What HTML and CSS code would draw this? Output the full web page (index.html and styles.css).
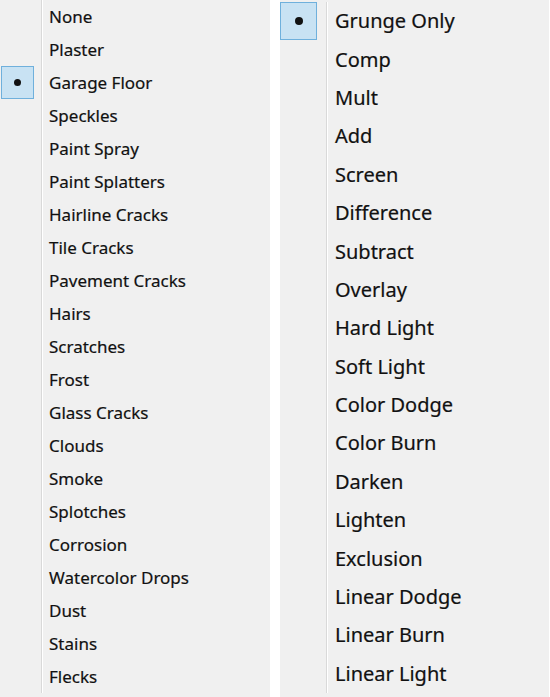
FILE: index.html
```html
<!DOCTYPE html>
<html>
<head>
<meta charset="utf-8">
<link rel="stylesheet" href="styles.css">
</head>
<body>
<div class="wrap">
  <ul class="menu menu-left">
    <li class="item"><span class="gut"></span><span class="label">None</span></li>
    <li class="item"><span class="gut"></span><span class="label">Plaster</span></li>
    <li class="item"><span class="gut"><span class="check"><span class="dot"></span></span></span><span class="label">Garage Floor</span></li>
    <li class="item"><span class="gut"></span><span class="label">Speckles</span></li>
    <li class="item"><span class="gut"></span><span class="label">Paint Spray</span></li>
    <li class="item"><span class="gut"></span><span class="label">Paint Splatters</span></li>
    <li class="item"><span class="gut"></span><span class="label">Hairline Cracks</span></li>
    <li class="item"><span class="gut"></span><span class="label">Tile Cracks</span></li>
    <li class="item"><span class="gut"></span><span class="label">Pavement Cracks</span></li>
    <li class="item"><span class="gut"></span><span class="label">Hairs</span></li>
    <li class="item"><span class="gut"></span><span class="label">Scratches</span></li>
    <li class="item"><span class="gut"></span><span class="label">Frost</span></li>
    <li class="item"><span class="gut"></span><span class="label">Glass Cracks</span></li>
    <li class="item"><span class="gut"></span><span class="label">Clouds</span></li>
    <li class="item"><span class="gut"></span><span class="label">Smoke</span></li>
    <li class="item"><span class="gut"></span><span class="label">Splotches</span></li>
    <li class="item"><span class="gut"></span><span class="label">Corrosion</span></li>
    <li class="item"><span class="gut"></span><span class="label">Watercolor Drops</span></li>
    <li class="item"><span class="gut"></span><span class="label">Dust</span></li>
    <li class="item"><span class="gut"></span><span class="label">Stains</span></li>
    <li class="item"><span class="gut"></span><span class="label">Flecks</span></li>
  </ul>
  <ul class="menu menu-right">
    <li class="item"><span class="gut"><span class="check"><span class="dot"></span></span></span><span class="label">Grunge Only</span></li>
    <li class="item"><span class="gut"></span><span class="label">Comp</span></li>
    <li class="item"><span class="gut"></span><span class="label">Mult</span></li>
    <li class="item"><span class="gut"></span><span class="label">Add</span></li>
    <li class="item"><span class="gut"></span><span class="label">Screen</span></li>
    <li class="item"><span class="gut"></span><span class="label">Difference</span></li>
    <li class="item"><span class="gut"></span><span class="label">Subtract</span></li>
    <li class="item"><span class="gut"></span><span class="label">Overlay</span></li>
    <li class="item"><span class="gut"></span><span class="label">Hard Light</span></li>
    <li class="item"><span class="gut"></span><span class="label">Soft Light</span></li>
    <li class="item"><span class="gut"></span><span class="label">Color Dodge</span></li>
    <li class="item"><span class="gut"></span><span class="label">Color Burn</span></li>
    <li class="item"><span class="gut"></span><span class="label">Darken</span></li>
    <li class="item"><span class="gut"></span><span class="label">Lighten</span></li>
    <li class="item"><span class="gut"></span><span class="label">Exclusion</span></li>
    <li class="item"><span class="gut"></span><span class="label">Linear Dodge</span></li>
    <li class="item"><span class="gut"></span><span class="label">Linear Burn</span></li>
    <li class="item"><span class="gut"></span><span class="label">Linear Light</span></li>
  </ul>
</div>
</body>
</html>
```

FILE: styles.css
```css
* { box-sizing: border-box; }
html, body {
  margin: 0;
  padding: 0;
  background: #ffffff;
}
.wrap {
  display: flex;
  gap: 10px;
  width: 550px;
  height: 697px;
  overflow: hidden;
}
.menu {
  list-style: none;
  margin: 0;
  padding: 0;
  background: #f0f0f0;
  height: 697px;
  font-family: "Noto Sans", "Open Sans", sans-serif;
  color: #111;
}
.menu-left {
  width: 270px;
  font-size: 17px;
}
.menu-right {
  width: 269px;
  padding-top: 2px;
  font-size: 20px;
}
.item {
  display: flex;
  align-items: stretch;
}
.menu-left .item { height: 33px; }
.menu-right .item { height: 38.4px; }
.gut {
  flex: none;
  display: flex;
  align-items: stretch;
}
.menu-left .gut { width: 41px; padding: 0 7px 0 1px; }
.menu-right .gut { width: 46px; padding: 0 9px 0 0; }
.label {
  flex: 1;
  display: flex;
  align-items: center;
  border-left: 1px solid #d9d9d9;
  box-shadow: inset 1px 0 0 #ffffff;
  white-space: nowrap;
  -webkit-text-stroke: 0.2px #111;
}
.menu-left .label { padding-left: 7px; padding-bottom: 0; }
.menu-right .label { padding-left: 8px; padding-bottom: 1px; }
.check {
  flex: 1;
  display: flex;
  align-items: center;
  justify-content: center;
  background: #c8e2f3;
  border: 1px solid #6fb0dc;
}
.menu-right .check { margin-bottom: 0.4px; }
.dot {
  width: 7px;
  height: 7px;
  border-radius: 50%;
  background: #111;
}
.menu-right .dot { width: 8px; height: 8px; }
```
